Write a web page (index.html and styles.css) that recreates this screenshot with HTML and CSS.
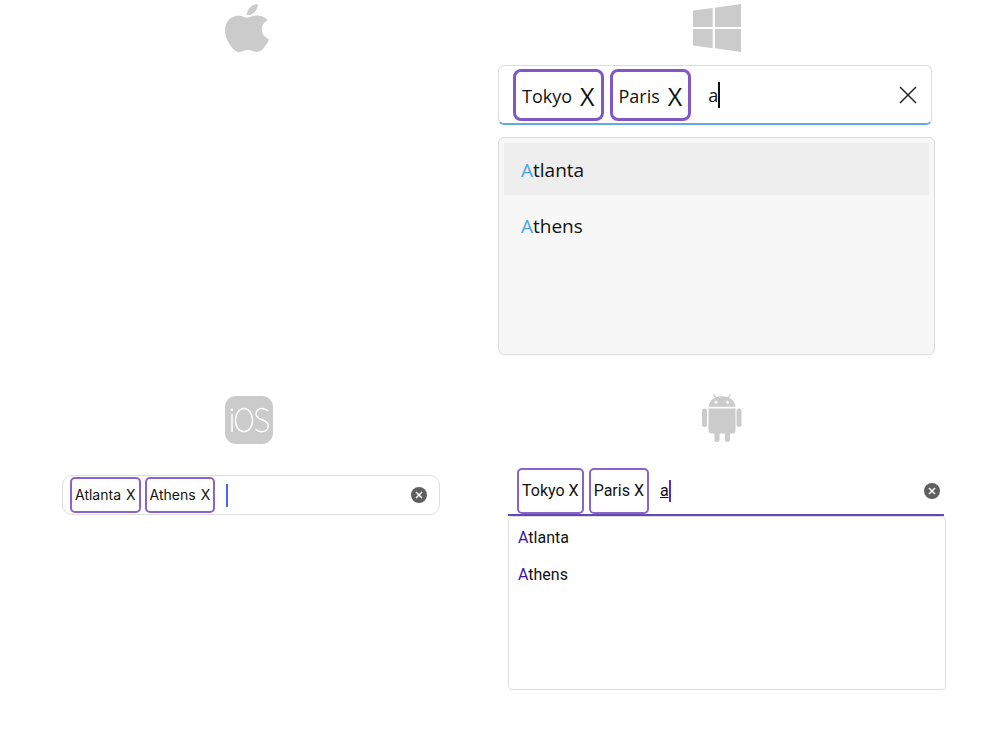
FILE: index.html
```html
<!DOCTYPE html>
<html lang="en">
<head>
<meta charset="utf-8">
<meta name="viewport" content="width=device-width, initial-scale=1">
<title>Autocomplete platforms</title>
<link rel="stylesheet" href="styles.css">
</head>
<body>
<main class="platforms">
  <section class="platform mac" aria-label="macOS">
    <svg class="logo apple" viewBox="2.2 0 19.6 24" preserveAspectRatio="none" aria-hidden="true">
      <path d="M12.152 6.896c-.948 0-2.415-1.078-3.96-1.04-2.04.027-3.91 1.183-4.961 3.014-2.117 3.675-.546 9.103 1.519 12.09 1.013 1.454 2.208 3.09 3.792 3.039 1.52-.065 2.09-.987 3.935-.987 1.831 0 2.35.987 3.96.948 1.637-.026 2.676-1.48 3.676-2.948 1.156-1.688 1.636-3.325 1.662-3.415-.039-.013-3.182-1.221-3.22-4.857-.026-3.04 2.48-4.494 2.597-4.559-1.429-2.09-3.623-2.324-4.39-2.376-2-.156-3.675 1.09-4.61 1.09zM15.53 3.83c.843-1.012 1.4-2.427 1.245-3.83-1.207.052-2.662.805-3.532 1.818-.78.896-1.454 2.338-1.273 3.714 1.338.104 2.715-.688 3.559-1.701"/>
    </svg>
  </section>

  <section class="platform windows" aria-label="Windows">
    <svg class="logo" viewBox="0 0 48 48" aria-hidden="true">
      <path d="M0 6.6 19.7 4v19H0zM22 3.700 48 0v23H22zM0 25h19.700v19.200L0 41.500zM22 25h26v23l-26-3.700z"/>
    </svg>
    <div class="field">
      <span class="chip">Tokyo <button type="button" aria-label="Remove Tokyo">X</button></span>
      <span class="chip">Paris <button type="button" aria-label="Remove Paris">X</button></span>
      <span class="entry"><input type="text" value="a" aria-label="City"><i class="caret"></i></span>
      <button class="clear" type="button" aria-label="Clear">
        <svg viewBox="0 0 18 18" aria-hidden="true"><path d="M1 1l16 16M17 1 1 17"/></svg>
      </button>
    </div>
    <div class="list">
      <button class="option selected" type="button"><mark>A</mark>tlanta</button>
      <button class="option" type="button"><mark>A</mark>thens</button>
    </div>
  </section>

  <section class="platform ios" aria-label="iOS">
    <svg class="logo" viewBox="0 0 48 48" aria-hidden="true">
      <rect width="48" height="48" rx="11"/>
      <g class="logo-line">
        <path d="M7 18v18M43 15c-2-1.800-4-2.500-6-2.500-3.700 0-6 2.400-6 5.500 0 7 12.300 4.500 12.300 11.700 0 3.600-2.700 6-6.500 6-2.600 0-4.700-.9-6.300-2.500"/>
        <ellipse cx="19" cy="24.200" rx="8.600" ry="11.600"/>
      </g>
      <circle class="logo-hole" cx="7" cy="13.800" r="1.300"/>
    </svg>
    <div class="field">
      <span class="chip">Atlanta <button type="button" aria-label="Remove Atlanta">X</button></span>
      <span class="chip">Athens <button type="button" aria-label="Remove Athens">X</button></span>
      <span class="entry"><i class="caret"></i><input type="text" aria-label="City"></span>
      <button class="clear round" type="button" aria-label="Clear">
        <svg viewBox="0 0 16 16" aria-hidden="true"><circle cx="8" cy="8" r="8"/><path d="M5 5l6 6M11 5l-6 6"/></svg>
      </button>
    </div>
  </section>

  <section class="platform android" aria-label="Android">
    <svg class="logo" viewBox="0 0 48 48" aria-hidden="true">
      <path d="M10.500 10.700c.4-4.300 3-7.400 6.600-9L15-1.300l1.100-.7 2.200 3.300a15 15 0 0 1 11.300 0L31.800-2l1.100.7-2.100 3c3.600 1.600 6.400 4.700 6.900 9z"/>
      <path d="M10.500 12.500h27v22a3 3 0 0 1-3 3H32V43.500a2.500 2.500 0 0 1-5 0v-6h-5.500v6a2.500 2.500 0 0 1-5 0v-6h-3a3 3 0 0 1-3-3z"/>
      <rect x="4" y="12.500" width="5" height="18.500" rx="2.500"/>
      <rect x="38.500" y="12.500" width="5" height="18.500" rx="2.500"/>
      <circle class="logo-hole" cx="18" cy="6.300" r="1.500"/>
      <circle class="logo-hole" cx="29.500" cy="6.300" r="1.500"/>
    </svg>
    <div class="field">
      <span class="chip">Tokyo <button type="button" aria-label="Remove Tokyo">X</button></span>
      <span class="chip">Paris <button type="button" aria-label="Remove Paris">X</button></span>
      <span class="entry"><input type="text" value="a" aria-label="City"><i class="caret"></i></span>
      <button class="clear round" type="button" aria-label="Clear">
        <svg viewBox="0 0 16 16" aria-hidden="true"><circle cx="8" cy="8" r="8"/><path d="M5 5l6 6M11 5l-6 6"/></svg>
      </button>
    </div>
    <div class="list">
      <button class="option" type="button"><mark>A</mark>tlanta</button>
      <button class="option" type="button"><mark>A</mark>thens</button>
    </div>
  </section>
</main>
</body>
</html>
```
FILE: styles.css
```css
* { box-sizing: border-box; }

body {
  margin: 0;
  background: #fff;
  color: #111;
}

button, input {
  margin: 0;
  padding: 0;
  border: 0;
  background: none;
  color: inherit;
  font: inherit;
}

input { outline: 0; }

.platforms {
  display: grid;
  grid-template-columns: minmax(0, 494fr) minmax(0, 506fr);
  row-gap: 41px;
  padding-top: 4px;
}

.platform {
  display: flex;
  flex-direction: column;
}

.logo {
  width: 48px;
  height: 48px;
  align-self: center;
  fill: #cbcbcb;
  overflow: visible;
}

.apple { width: 44px; }
.logo-line { fill: none; stroke: #fff; stroke-width: 1.5; }
.logo-hole { fill: #fff; }

.field {
  display: flex;
  align-items: center;
}

.chip {
  display: flex;
  align-items: center;
  border: 2px solid #8a63cc;
  border-radius: 5px;
  white-space: nowrap;
}

.entry {
  display: flex;
  align-items: center;
  flex: 1;
  min-width: 0;
}

.clear { display: flex; }
.clear svg { width: 18px; height: 18px; fill: none; stroke: #222; stroke-width: 1.5; }
.round svg { width: 16px; height: 16px; stroke: #fff; }
.round circle { fill: #5f5f5f; stroke: none; }

.option {
  display: block;
  width: 100%;
  text-align: left;
}

mark { background: none; }

/* Windows */
.windows {
  padding: 0 65px 0 4px;
  font: 19px/26px "Open Sans", "Noto Sans", sans-serif;
}

.windows .field {
  height: 60px;
  margin: 13px 3px 12px 0;
  padding: 0 14px;
  gap: 6px;
  border: 1px solid #dcdcdc;
  border-bottom: 2px solid #62abe2;
  border-radius: 6px;
  font-size: 18px;
}

.windows .chip {
  height: 52px;
  padding: 2px 6px 0;
  gap: 8px;
  border-width: 3px;
  border-color: #8257c3;
  border-radius: 8px;
}

.windows .chip button { font-size: 25px; }
.windows .entry { padding-left: 11px; }
.windows .entry input { width: 10px; }
.windows .caret { width: 2px; height: 26px; background: #111; }

.windows .list {
  height: 218px;
  padding: 5px;
  border: 1px solid #dcdcdc;
  border-radius: 6px;
  background: #f7f7f7;
}

.windows .option { height: 52px; padding: 2px 17px 0; margin-bottom: 4px; }
.windows .selected { background: #eee; }
.windows mark { color: #4aa3e8; }

/* iOS */
.ios {
  padding: 0 54px 0 62px;
  font: 14px/20px Inter, "Liberation Sans", sans-serif;
}

.ios .logo { margin-right: 4px; }

.ios .field {
  height: 40px;
  margin-top: 31px;
  padding: 0 12px 0 7px;
  gap: 4px;
  border: 1px solid #dedede;
  border-radius: 10px;
}

.ios .chip { height: 36px; padding: 0 3px; gap: 5px; }
.ios .entry { padding-left: 7px; }
.ios .entry input { flex: 1; min-width: 0; }
.ios .caret { width: 2px; height: 23px; background: #3f6cf0; }

/* Android */
.android {
  padding: 0 54px 0 14px;
  font: 16px/22px Roboto, sans-serif;
}

.android .logo { margin-right: 10px; }

.android .field {
  height: 49px;
  margin: 23px 2px 0 0;
  padding: 0 4px 0 9px;
  gap: 5px;
  border-bottom: 2px solid #6547b4;
}

.android .chip { height: 46px; padding: 0 3px; gap: 4px; }
.android .entry { padding-left: 6px; }
.android .entry input { width: 9px; text-decoration: underline; }
.android .caret { width: 2px; height: 22px; background: #512bd4; }

.android .list {
  height: 174px;
  padding-top: 2px;
  border: 1px solid #dedede;
  border-radius: 4px;
}

.android .option { height: 37px; padding: 0 9px; }
.android mark { color: #3b14a7; }
```
